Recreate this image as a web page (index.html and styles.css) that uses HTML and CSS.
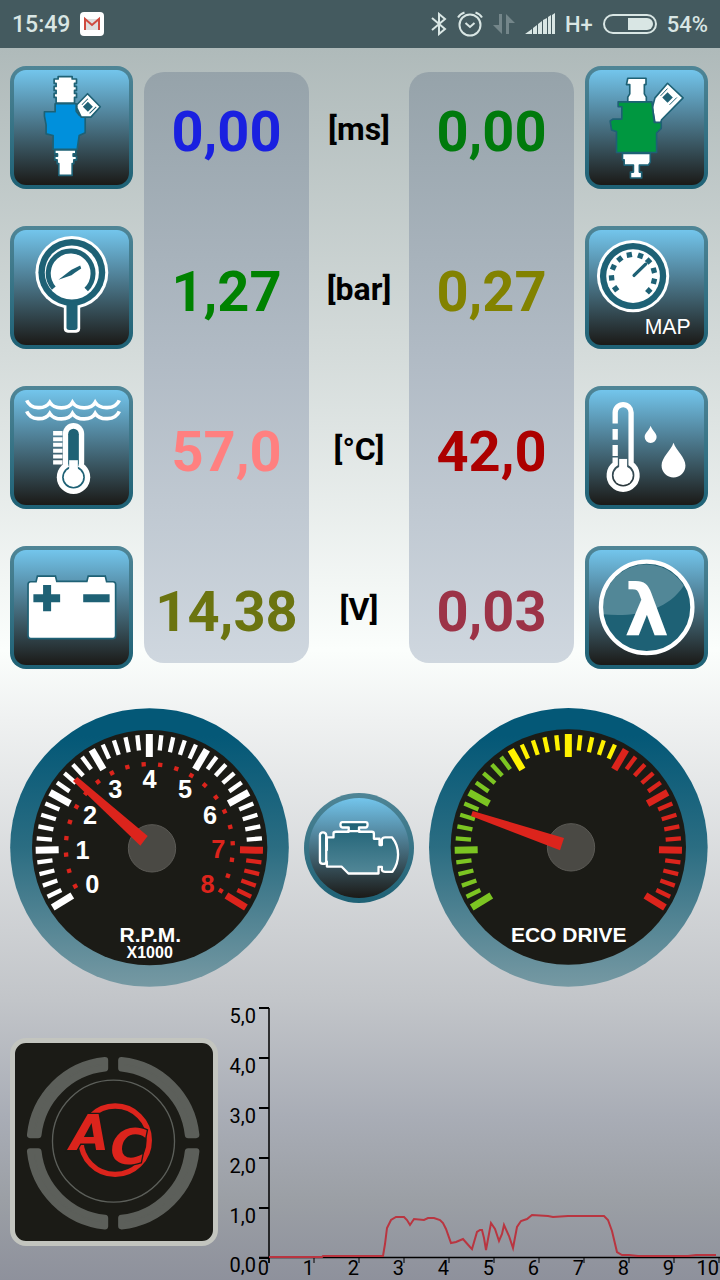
FILE: index.html
```html
<!DOCTYPE html>
<html lang="en">
<head>
    <meta charset="UTF-8">
    <meta name="viewport" content="width=device-width, initial-scale=1.0">
    <title>AC dashboard</title>
    <link rel="stylesheet" href="styles.css">
</head>
<body>
    <!-- status bar -->
    <header class="status">
        <span class="time">15:49</span>
        <svg class="mail" width="24" height="24" viewBox="0 0 24 24">
            <rect width="24" height="24" rx="4" fill="#fff"/>
            <path d="M5 7h14v11H5z" fill="#dedede"/>
            <path d="M5 18V7l7 6 7-6v11" fill="none" stroke="#cf4a3f" stroke-width="2"/>
        </svg>
        <div class="status-right">
            <svg width="16" height="24" viewBox="0 0 16 24" fill="none" stroke="#d9e6e4" stroke-width="2">
                <path d="M1 6l13 11-6 5V2l6 5L1 18"/>
            </svg>
            <svg width="26" height="26" viewBox="0 0 26 26" fill="none" stroke="#d9e6e4" stroke-width="2">
                <circle cx="13" cy="14" r="10.5"/>
                <path d="M8.500 12l4.500 4 4.500-4M1 6.500Q3 3 7.500 1.500M25 6.500Q23 3 18.500 1.500"/>
            </svg>
            <svg width="22" height="22" viewBox="0 0 22 22" fill="#74868a">
                <path d="M6 1h3v20L0 12h6zM13 21V1l9 9h-6v11z"/>
            </svg>
            <svg width="30" height="22" viewBox="0 0 30 22" fill="#d9e6e4">
                <path d="M0 21l7-5v5zM8 15l4-3v9H8zM13 11l4-3v13h-4zM18 7l4-2v16h-4zM23 4l3-2v19h-3zM27 2l3-2v21h-3z"/>
            </svg>
            <span>H+</span>
            <svg width="54" height="20" viewBox="0 0 54 20">
                <rect x="1" y="1" width="52" height="18" rx="9" fill="none" stroke="#d9e6e4" stroke-width="2"/>
                <path d="M25 4h19a6 6 0 0 1 0 12H25z" fill="#d9e6e4"/>
            </svg>
            <span>54%</span>
        </div>
    </header>

    <main>
        <!-- readings -->
        <section class="readings">
            <div class="panel panel-left"></div>
            <div class="panel panel-right"></div>

            <div class="tile">
                <svg viewBox="42 42 344 344" stroke="#1e6175" stroke-width="5" stroke-linejoin="round">
                    <path fill="#fff" d="M174 62H216V69H229V82H223V91H229V103H223V112H229V124H223V141H168V124H162V112H168V103H162V91H168V82H162V69H174Z"/>
                    <path fill="#fff" d="M164 281H227V293H219V300H229V311H221V322H216V357H176V322H171V311H164V300H172V293H164Z"/>
                    <path fill="#0090dc" d="M165 143H228V165L238 178H255V230L237 238L231 279H159V238L138 233V206L133 180V167H165Z"/>
                    <path fill="#fff" d="M262 113L300 152L272 183H243L230 156V146Z"/>
                    <path fill="#1e6175" stroke="none" d="M263 137L278 152 263 167 248 152Z"/>
                    <path fill="none" stroke-width="3" d="M245 146l18-18M268 172l20-20"/>
                </svg>
            </div>
            <output class="value blue">0,00</output>
            <span class="unit">[ms]</span>
            <output class="value forest">0,00</output>
            <div class="tile">
                <svg viewBox="567 42 347 347" stroke="#1e6175" stroke-width="5" stroke-linejoin="round">
                    <path fill="#fff" d="M804 82L851 126L786 192L782 206L766 200L758 156L766 126Z"/>
                    <path fill="#fff" d="M684 67H739V86H734V114L740 124V138H684V124L690 114V86H680Z"/>
                    <path fill="#fff" d="M668 294H752V320L746 329H719V350H726V368H692V350H701V329H673V313H668Z"/>
                    <path fill="#009740" d="M655 138H757L764 200H785V218L771 232V291H650V228L635 223L631 196L640 190H666V153H655Z"/>
                    <path fill="#1e6175" stroke="none" d="M804 109L820 125 804 141 788 125Z"/>
                    <path fill="none" stroke-width="3" d="M783 120l21-22M810 147l22-22"/>
                </svg>
            </div>

            <div class="tile">
                <svg viewBox="42 522 344 344">
                    <rect x="191" y="710" width="49" height="119" rx="12" fill="#fff"/>
                    <circle cx="215" cy="649" r="109" fill="#fff"/>
                    <circle cx="215" cy="649" r="100" fill="#1e6175"/>
                    <path d="M199 735h33v78q0 8-8 8h-17q-8 0-8-8z" fill="#1e6175"/>
                    <circle cx="215" cy="649" r="81" fill="#fff"/>
                    <path d="M161 696A67 67 0 1 1 258 700" fill="none" stroke="#1e6175" stroke-width="15"/>
                    <path d="M175 671L206 647 214 641 240 628 243 637 224 650 214 657Z" fill="#1e6175"/>
                </svg>
            </div>
            <output class="value green">1,27</output>
            <span class="unit">[bar]</span>
            <output class="value olive">0,27</output>
            <div class="tile">
                <svg viewBox="567 522 347 347">
                    <circle cx="700" cy="661" r="109" fill="#fff"/>
                    <circle cx="700" cy="661" r="100" fill="#1e6175"/>
                    <circle cx="700" cy="661" r="81" fill="#fff"/>
                    <g id="map-marks" fill="#1e6175"></g>
                    <path d="M703 659l35-34" stroke="#1e6175" stroke-width="10" stroke-linecap="round"/>
                    <text class="map-label" x="735" y="836">MAP</text>
                </svg>
            </div>

            <div class="tile">
                <svg viewBox="42 42 344 344">
                    <g fill="none" stroke="#fff" stroke-width="11">
                        <path d="M80 73C92 101 135 101 149 79C163 101 205 101 217 79C231 101 273 101 285 79C299 101 345 101 357 73"/>
                        <path d="M80 106C92 134 135 134 149 112C163 134 205 134 217 112C231 134 273 134 285 112C299 134 345 134 357 106"/>
                    </g>
                    <path d="M159 165h28v13h-28zM159 183h28v12h-28zM159 200h28v12h-28zM159 218h28v12h-28zM159 235h28v12h-28zM159 252h28v13h-28z" fill="#fff"/>
                    <rect x="188" y="141" width="64" height="150" rx="32" fill="#fff"/>
                    <circle cx="220" cy="303" r="50" fill="#fff"/>
                    <rect x="204" y="158" width="32" height="120" rx="16" fill="#1e6175"/>
                    <circle cx="220" cy="303" r="34" fill="#1e6175"/>
                    <circle cx="220" cy="303" r="29" fill="#fff"/>
                    <path d="M207 252h26v30h-26z" fill="#fff"/>
                </svg>
            </div>
            <output class="value pink">57,0</output>
            <span class="unit">[°C]</span>
            <output class="value red">42,0</output>
            <div class="tile">
                <svg viewBox="567 42 347 347">
                    <g fill="none" stroke="#fff" stroke-width="16">
                        <path d="M646 143V110A24 24 0 0 1 694 110V265A42 42 0 1 1 646 265V246"/>
                        <path d="M646 160v32M646 208v33"/>
                    </g>
                    <circle cx="670" cy="300" r="29" fill="#fff"/>
                    <path d="M658 250h24v30h-24z" fill="#fff"/>
                    <path d="M753 150C758 165 771 172 771 184A18 18 0 0 1 735 184C735 172 748 165 753 150Z" fill="#fff"/>
                    <path d="M822 201C830 225 858 245 858 270A36 36 0 0 1 786 270C786 245 814 225 822 201Z" fill="#fff"/>
                </svg>
            </div>

            <div class="tile">
                <svg viewBox="42 522 344 344">
                    <path d="M92 617H108L112 600H166L170 616H260L264 600H315L319 617H338Q346 617 346 625V778Q346 787 338 787H92Q84 787 84 778V625Q84 617 92 617Z" fill="#fff" stroke="#1e6175" stroke-width="5"/>
                    <path d="M100 654h29v-27h24v27h27v24h-27v27h-24v-27h-29zM249 654h79v24h-79z" fill="#1e6175"/>
                </svg>
            </div>
            <output class="value moss">14,38</output>
            <span class="unit">[V]</span>
            <output class="value wine">0,03</output>
            <div class="tile">
                <svg viewBox="567 522 347 347">
                    <circle cx="741" cy="695" r="138" fill="#1e6175"/>
                    <path d="M609 716C700 725 800 710 853 630A132 132 0 0 0 609 716Z" fill="#528797"/>
                    <circle cx="741" cy="695" r="138" fill="none" stroke="#fff" stroke-width="13"/>
                    <text class="lambda" x="741" y="777">λ</text>
                </svg>
            </div>
        </section>

        <!-- gauges -->
        <section class="gauges">
            <svg class="gauge" viewBox="30 24 837 837">
                <defs>
                    <linearGradient id="ring" x1="0" y1="0" x2="0" y2="1">
                        <stop offset=".1" stop-color="#045877"/>
                        <stop offset=".5" stop-color="#2b6d82"/>
                        <stop offset="1" stop-color="#7699a3"/>
                    </linearGradient>
                </defs>
                <circle cx="448.500" cy="442.500" r="418" fill="url(#ring)"/>
                <circle cx="449" cy="443" r="353" fill="#1b1b16"/>
                <g id="rpm-ticks"></g>
                <g id="rpm-dots" fill="#dc241c"></g>
                <g class="numbers">
                    <text x="277" y="580">0</text>
                    <text x="248" y="477">1</text>
                    <text x="270" y="372">2</text>
                    <text x="346" y="293">3</text>
                    <text x="449" y="265">4</text>
                    <text x="555" y="293">5</text>
                    <text x="630" y="372">6</text>
                    <text class="hot" x="655" y="475">7</text>
                    <text class="hot" x="623" y="580">8</text>
                </g>
                <text class="gauge-title" x="451" y="726">R.P.M.</text>
                <text class="gauge-sub" x="449" y="775">X1000</text>
                <circle cx="456" cy="445" r="71" fill="#4a4944" stroke="#5b5a55" stroke-width="3"/>
                <path d="M232 231L443 408 421 437 219 243Z" fill="#dc241c"/>
            </svg>

            <button class="engine" aria-label="Engine">
                <svg viewBox="57 51 302 302">
                    <defs>
                        <linearGradient id="metal" x1="0" y1="0" x2="0" y2="1">
                            <stop offset="0" stop-color="#1e6175"/>
                            <stop offset="1" stop-color="#528797"/>
                        </linearGradient>
                    </defs>
                    <path d="M158 124H228Q234 124 234 131 234 140 228 140H208V153H247Q253 153 253 159V174H270V193H277V177Q279 170 287 170H308Q326 192 326 222 326 252 309 274H287Q279 274 277 268V259H267V279H176L155 258H111V243Q109 250 99 250 90 249 90 242V163Q91 155 99 155 108 155 109 163V208H111V170H131V158Q131 153 138 153H177V140H158Q152 140 152 132 152 124 158 124Z" fill="url(#metal)" stroke="#fff" stroke-width="7" stroke-linejoin="round"/>
                    <path d="M109 170V198M109 208V246M173 151H212" fill="none" stroke="#fff" stroke-width="7"/>
                </svg>
            </button>

            <svg class="gauge" viewBox="30 24 837 837">
                <circle cx="448" cy="442" r="418" fill="url(#ring)"/>
                <circle cx="448" cy="441" r="353" fill="#1b1b16"/>
                <g id="eco-ticks"></g>
                <text class="gauge-title" x="449" y="725">ECO DRIVE</text>
                <circle cx="456" cy="442" r="71" fill="#4a4944" stroke="#5b5a55" stroke-width="3"/>
                <path d="M161 333L435 414 423 451 156 348Z" fill="#dc241c"/>
            </svg>
        </section>

        <!-- switch and chart -->
        <section class="bottom">
            <button class="switch" aria-label="AC">
                <svg viewBox="45 40 597 597">
                    <defs>
                        <path id="seg" d="M316 92A251 251 0 0 0 91 317H115A227 227 0 0 1 316 116Z"/>
                    </defs>
                    <g fill="#5c5f5a" stroke="#5c5f5a" stroke-width="20" stroke-linejoin="round">
                        <use href="#seg"/>
                        <use href="#seg" transform="rotate(90 341 342)"/>
                        <use href="#seg" transform="rotate(180 341 342)"/>
                        <use href="#seg" transform="rotate(270 341 342)"/>
                    </g>
                    <circle cx="342" cy="336" r="184" fill="none" stroke="#5c5f5a" stroke-width="4"/>
                    <circle cx="347" cy="333" r="103" fill="none" stroke="#dc241c" stroke-width="16"/>
                    <text class="logo" x="212" y="362">A</text>
                    <text class="logo" x="332" y="404">C</text>
                </svg>
            </button>
            <svg class="chart" viewBox="0 0 502 280">
                <path d="M51 8V263M41 257.500H502" fill="none" stroke="#000" stroke-width="1.500"/>
                <g id="chart-axis"></g>
                <polyline fill="none" stroke="#b93540" stroke-width="2" points="51,257 104,257 105,256 160,256 165,256 167,244 169,228 173,220 178,217 186,217 189,220 192,225 196,219 206,220 210,218 216,218 222,220 225,223 228,229 233,243 238,242 245,239 252,247 254,249 259,232 262,230 264,230 266,238 268,250 273,223 277,229 281,241 284,234 286,225 291,236 295,248 299,227 303,221 309,219 314,215 330,216 335,217 350,216 386,216 390,220 394,231 399,252 404,255 411,255 420,256 470,256 478,255 498,255"/>
            </svg>
        </section>
    </main>

    <script>
        var NS = 'http://www.w3.org/2000/svg';
        function add(parent, name, attrs, text) {
            var el = document.createElementNS(NS, name);
            for (var key in attrs) {
                el.setAttribute(key, attrs[key]);
            }
            if (text) {
                el.textContent = text;
            }
            parent.appendChild(el);
        }

        // gauge scale, every fifth tick is a long one
        function ticks(id, color) {
            var g = document.getElementById(id);
            for (var i = 0; i <= 40; i++) {
                var big = i % 5 == 0;
                add(g, 'path', {
                    d: big ? 'M448 102V171' : 'M448 104V150',
                    stroke: color(i),
                    'stroke-width': big ? 21 : 13,
                    transform: 'rotate(' + (i - 20) * 6.09 + ' 448 443)'
                });
            }
        }
        ticks('rpm-ticks', function (i) {
            return i < 35 ? '#fff' : '#dc241c';
        });
        ticks('eco-ticks', function (i) {
            return i < 15 ? '#7cc522' : i < 25 ? '#fff200' : '#dc241c';
        });

        // red dots inside the rpm scale
        var dots = document.getElementById('rpm-dots');
        for (var i = 0; i < 22; i++) {
            add(dots, 'path', {
                d: 'M442 186h13v13h-13z',
                transform: 'rotate(' + (i * 11.36 - 117.6) + ' 448 443)'
            });
        }

        // marks of the MAP sensor dial
        var marks = document.getElementById('map-marks');
        [-126, -95, -66, -38, -10, 20, 46, 75, 104, 133].forEach(function (a) {
            add(marks, 'path', {
                d: 'M692 588h16v16h-16z',
                transform: 'rotate(' + a + ' 700 661)'
            });
        });

        // chart axis
        var axis = document.getElementById('chart-axis');
        for (var x = 0; x <= 10; x++) {
            add(axis, 'path', { d: 'M' + (51 + x * 45) + ' 257v6', stroke: '#000' });
            add(axis, 'text', { x: 51 + x * 45, y: 275 }, String(x));
        }
        for (var y = 0; y <= 5; y++) {
            add(axis, 'path', { d: 'M41 ' + (258 - y * 50) + 'h10', stroke: '#000', 'stroke-width': 2 });
            add(axis, 'text', { x: 38, y: (y ? 273 : 272) - y * 50 }, y + ',0');
        }
    </script>
</body>
</html>
```

FILE: styles.css
```css
* {
    margin: 0;
    padding: 0;
    box-sizing: border-box;
}
body {
    min-height: 100vh;
    font-family: Roboto, "Liberation Sans", sans-serif;
    background: linear-gradient(#afbaba 48px, #d4dbda 350px, #fbfefc 650px, #eff1f1 720px, #c2c5c9 1000px, #a9adb6 1115px, #9b9fa5 1200px, #8e919c 1280px);
}
svg {
    display: block;
}
button {
    border: none;
    cursor: pointer;
}
.status {
    display: flex;
    align-items: center;
    height: 48px;
    padding: 0 12px;
    background: #445a5f;
    color: #d9e6e4;
    font-size: 23px;
    font-weight: 500;
}
.mail {
    margin-left: 10px;
}
.status-right {
    display: flex;
    align-items: center;
    gap: 10px;
    margin-left: auto;
    font-size: 22px;
}
.readings {
    display: grid;
    grid-template-columns: 123px 1fr 78px 1fr 123px;
    grid-template-rows: repeat(4, 123px);
    gap: 37px 11px;
    padding: 18px 12px 0 10px;
    align-items: center;
    justify-items: center;
}
.panel {
    grid-row: 1 / -1;
    align-self: stretch;
    justify-self: stretch;
    margin: 6px 0;
    border-radius: 20px;
    background: linear-gradient(#96a3aa, #b0bac4 47%, #cfd7df);
}
.panel-left {
    grid-column: 2;
}
.panel-right {
    grid-column: 4;
}
.tile:nth-child(5n + 3) {
    grid-column: 1;
}
.readings > :nth-child(5n + 4) {
    grid-column: 2;
}
.readings > :nth-child(5n + 5) {
    grid-column: 3;
}
.readings > :nth-child(5n + 6) {
    grid-column: 4;
}
.readings > :nth-child(5n + 7) {
    grid-column: 5;
}
.readings > :nth-child(n + 3):nth-child(-n + 7) {
    grid-row: 1;
}
.readings > :nth-child(n + 8):nth-child(-n + 12) {
    grid-row: 2;
}
.readings > :nth-child(n + 13):nth-child(-n + 17) {
    grid-row: 3;
}
.readings > :nth-child(n + 18) {
    grid-row: 4;
}
.tile {
    width: 100%;
    border: 4px solid transparent;
    border-radius: 16px;
    background: linear-gradient(#73c5ec, #1b1a17) padding-box, linear-gradient(#4f8596, #1e6175) border-box;
}
.value {
    padding-top: 8px;
    font-size: 56px;
    font-weight: 700;
}
.unit {
    padding-top: 2px;
    font-size: 32px;
    font-weight: 700;
    color: #000;
}
.blue {
    color: #1a20e0;
}
.forest {
    color: #007a0c;
}
.green {
    color: #008200;
}
.olive {
    color: #828200;
}
.pink {
    color: #ff8080;
}
.red {
    color: #ac0000;
}
.moss {
    color: #6b7410;
}
.wine {
    color: #9c3347;
}
.map-label {
    font: 64px "Liberation Sans", sans-serif;
    fill: #fff;
}
.lambda {
    font: bold 214px "DejaVu Sans", sans-serif;
    text-anchor: middle;
    fill: #fff;
}
.gauges {
    display: grid;
    grid-template-columns: 1fr 110px 1fr;
    gap: 15px;
    align-items: center;
    padding: 39px 12px 0 10px;
}
.gauge {
    width: 100%;
}
.gauge text {
    font-family: "Liberation Sans", sans-serif;
    font-weight: bold;
    text-anchor: middle;
    fill: #fff;
}
.numbers {
    font-size: 76px;
}
.gauge .hot {
    fill: #dc241c;
}
.gauge-title {
    font-size: 63px;
}
.gauge-sub {
    font-size: 48px;
}
.engine {
    border: 5px solid transparent;
    border-radius: 50%;
    background: linear-gradient(#73c5ec, #1b1a17) padding-box, linear-gradient(#4f8596, #1e6175) border-box;
}
.bottom {
    display: grid;
    grid-template-columns: 208px 1fr;
    align-items: start;
    padding: 13px 0 0 10px;
}
.switch {
    margin-top: 38px;
    border: 5px solid #c3c5bf;
    border-radius: 16px;
    background: #1b1b16;
}
.logo {
    font: italic bold 152px "DejaVu Sans", sans-serif;
    fill: #dc241c;
    stroke: #1b1b16;
    stroke-width: 8px;
    paint-order: stroke;
}
.chart {
    width: 100%;
}
.chart text {
    font-size: 20px;
    text-anchor: end;
}
```
